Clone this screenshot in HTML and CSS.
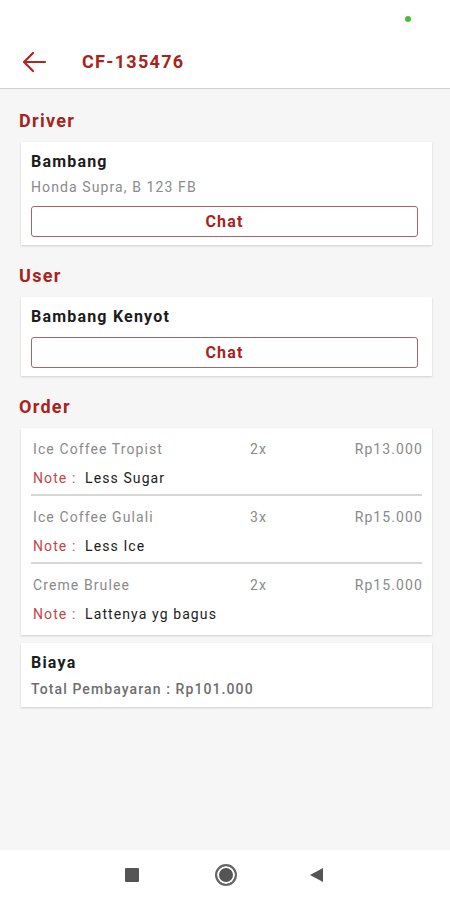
FILE: index.html
```html
<!DOCTYPE html>
<html lang="id">

<head>
  <meta charset="UTF-8">
  <meta name="viewport" content="width=device-width, initial-scale=1.0">
  <title>CF-135476</title>
  <link rel="stylesheet" href="styles.css">
</head>

<body>
  <div class="status">
    <span class="status-dot"></span>
  </div>

  <header class="appbar">
    <svg class="back" width="26" height="22" viewBox="0 0 26 22">
      <path d="M24 11H3M12 2L3 11l9 9" fill="none" stroke="#b3261e" stroke-width="2.2" stroke-linecap="round" stroke-linejoin="round" />
    </svg>
    <h1 class="title">CF-135476</h1>
  </header>

  <main class="content">
    <h2 class="section-title">Driver</h2>
    <div class="card">
      <div class="name">Bambang</div>
      <div class="sub">Honda Supra, B 123 FB</div>
      <button class="btn-chat">Chat</button>
    </div>

    <h2 class="section-title">User</h2>
    <div class="card">
      <div class="name">Bambang Kenyot</div>
      <button class="btn-chat">Chat</button>
    </div>

    <h2 class="section-title">Order</h2>
    <div class="card order">
      <div class="item">
        <div class="item-row">
          <span>Ice Coffee Tropist</span>
          <span>2x</span>
          <span class="price">Rp13.000</span>
        </div>
        <div class="note"><span class="note-label">Note :</span> Less Sugar</div>
      </div>
      <div class="item">
        <div class="item-row">
          <span>Ice Coffee Gulali</span>
          <span>3x</span>
          <span class="price">Rp15.000</span>
        </div>
        <div class="note"><span class="note-label">Note :</span> Less Ice</div>
      </div>
      <div class="item">
        <div class="item-row">
          <span>Creme Brulee</span>
          <span>2x</span>
          <span class="price">Rp15.000</span>
        </div>
        <div class="note"><span class="note-label">Note :</span> Lattenya yg bagus</div>
      </div>
    </div>

    <div class="card cost">
      <div class="name">Biaya</div>
      <div class="total">Total Pembayaran : Rp101.000</div>
    </div>
  </main>

  <nav class="navbar">
    <span class="nav-square"></span>
    <span class="nav-circle"></span>
    <span class="nav-back"></span>
  </nav>
</body>

</html>
```

FILE: styles.css
```css
* {
  padding: 0;
  margin: 0;
  box-sizing: border-box;
}

body {
  width: 450px;
  height: 900px;
  display: flex;
  flex-direction: column;
  background-color: #f6f6f6;
  font-family: Roboto, "Liberation Sans", sans-serif;
  color: #222;
  letter-spacing: 1.1px;
}

.status {
  height: 35px;
  background-color: #fff;
  display: flex;
  justify-content: flex-end;
  align-items: center;
  padding-right: 39px;
}

.status-dot {
  width: 6px;
  height: 6px;
  border-radius: 50%;
  background-color: #4cbb3a;
  margin-top: 2px;
}

.appbar {
  height: 54px;
  background-color: #fff;
  border-bottom: 1.5px solid #cfcfcf;
  display: flex;
  align-items: center;
  padding-left: 21px;
}

.back {
  margin-right: 35px;
}

.title {
  font-size: 18px;
  font-weight: 700;
  color: #a8231d;
  letter-spacing: 1.3px;
}

.content {
  flex: 1;
  padding: 0 18px 0 19px;
}

.section-title {
  font-size: 18px;
  line-height: 22px;
  font-weight: 700;
  color: #a8231d;
  letter-spacing: 1.3px;
  margin-top: 20px;
  margin-bottom: 10px;
}

.section-title:first-child {
  margin-top: 21px;
}

.card {
  background-color: #fff;
  margin-left: 2px;
  padding: 10px 14px 8px 10px;
  box-shadow: 0 1px 2px rgba(0, 0, 0, 0.16);
}

.name {
  font-size: 16px;
  line-height: 20px;
  font-weight: 700;
  color: #1c1c1c;
  letter-spacing: 1.2px;
}

.sub {
  font-size: 14px;
  line-height: 18px;
  color: #8a8a8a;
  margin-top: 6px;
}

.btn-chat {
  display: block;
  width: 100%;
  height: 31px;
  margin-top: 10px;
  background-color: #fff;
  border: 1.5px solid #a36866;
  border-radius: 3px;
  font-family: inherit;
  font-size: 16px;
  font-weight: 700;
  letter-spacing: 1.2px;
  color: #a8231d;
}

.order {
  padding: 0 10px 12px 10px;
}

.item {
  padding: 12px 0 7px 2px;
  border-bottom: 2px solid #d6d6d6;
}

.item:last-child {
  border-bottom: none;
  padding-bottom: 0;
}

.item-row {
  display: grid;
  grid-template-columns: 217px auto 1fr;
  font-size: 14px;
  line-height: 18px;
  color: #8a8a8a;
}

.price {
  text-align: right;
  margin-right: -1px;
}

.note {
  margin-top: 11px;
  font-size: 14px;
  line-height: 18px;
  color: #1c1c1c;
}

.note-label {
  color: #c0484a;
  margin-right: 4px;
}

.cost {
  margin-top: 8px;
  padding: 10px 10px 9px 10px;
}

.total {
  margin-top: 7px;
  font-size: 14px;
  line-height: 18px;
  font-weight: 500;
  color: #6e6e6e;
}

.navbar {
  height: 50px;
  background-color: #fff;
  display: flex;
  align-items: center;
  padding-left: 125px;
}

.nav-square {
  width: 14px;
  height: 14px;
  background-color: #555;
  border-radius: 1px;
}

.nav-circle {
  width: 22px;
  height: 22px;
  margin-left: 76px;
  border-radius: 50%;
  border: 2px solid #666;
  background-color: #555;
  box-shadow: inset 0 0 0 2px #fff;
}

.nav-back {
  width: 0;
  height: 0;
  margin-left: 73px;
  border-top: 7px solid transparent;
  border-bottom: 7px solid transparent;
  border-right: 13px solid #555;
}
```
